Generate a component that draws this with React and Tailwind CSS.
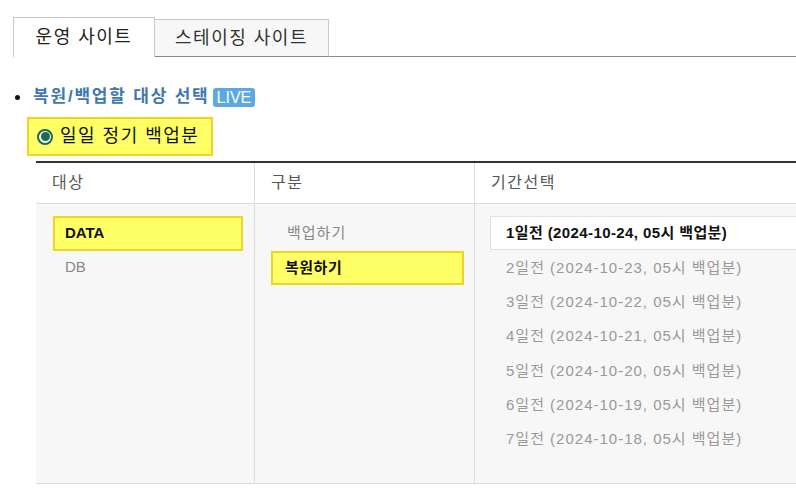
import { useState } from "react";

const FONT = { fontFamily: '"Liberation Sans", "Noto Sans CJK KR", sans-serif' };

const periods = [
  "1일전 (2024-10-24, 05시 백업분)",
  "2일전 (2024-10-23, 05시 백업분)",
  "3일전 (2024-10-22, 05시 백업분)",
  "4일전 (2024-10-21, 05시 백업분)",
  "5일전 (2024-10-20, 05시 백업분)",
  "6일전 (2024-10-19, 05시 백업분)",
  "7일전 (2024-10-18, 05시 백업분)",
];

export default function App() {
  const [tab, setTab] = useState(0);

  return (
    <div className="w-[796px] h-[496px] overflow-hidden bg-white text-[#333]" style={FONT}>
      {/* Tabs */}
      <div className="flex items-end pt-[17px] pl-[13px]">
        <button
          onClick={() => setTab(0)}
          className="w-[142px] h-[40px] border border-b-0 border-[#c8c8c8] bg-white text-[18px] tracking-[1.5px] text-[#222]"
        >
          운영 사이트
        </button>
        <button
          onClick={() => setTab(1)}
          className="w-[174px] h-[38px] border border-l-0 border-[#c8c8c8] border-b-[#8a8a8a] bg-[#f7f7f7] text-[18px] tracking-[1.5px] text-[#333]"
        >
          스테이징 사이트
        </button>
        <div className="flex-1 border-b border-[#8a8a8a]" />
      </div>

      {/* Heading */}
      <div className="flex items-center mt-[30px] pl-[15px] h-[20px]">
        <span className="w-[5px] h-[5px] rounded-full bg-[#111] mr-[13px]" />
        <span className="text-[17px] font-bold text-[#3f77b0] tracking-[1.8px]">복원/백업할 대상 선택</span>
        <span className="ml-[3px] px-[4px] h-[19px] leading-[19px] rounded-[3px] bg-[#5ba8e3] text-white text-[16px]">LIVE</span>
      </div>

      {/* Radio */}
      <div className="ml-[27px] mt-[10px] w-[186px] h-[39px] flex items-center bg-[#ffff66] border-2 border-[#f0d324]">
        <span className="ml-[8px] w-[16px] h-[16px] rounded-full border-2 border-[#1f6b4f] flex items-center justify-center bg-white">
          <span className="w-[9px] h-[9px] rounded-full bg-[#1f6b4f]" />
        </span>
        <span className="ml-[7px] text-[18px] tracking-[1.5px] text-[#111]">일일 정기 백업분</span>
      </div>

      {/* Table */}
      <div className="ml-[36px] mt-[5px] border-t-2 border-[#333]">
        <div className="grid grid-cols-[219px_220px_1fr] h-[41px] border-b border-[#dcdcdc] text-[16px] tracking-[1.5px] text-[#555]">
          <div className="flex items-center pl-[16px] border-r border-[#dcdcdc]">대상</div>
          <div className="flex items-center pl-[16px] border-r border-[#dcdcdc]">구분</div>
          <div className="flex items-center pl-[16px]">기간선택</div>
        </div>
        <div className="grid grid-cols-[219px_220px_1fr] h-[280px] bg-[#f7f7f7] border-b border-[#dcdcdc] text-[15px]">
          <div className="border-r border-[#dcdcdc] pt-[12px] pl-[17px] pr-[11px]">
            <div className="h-[35px] flex items-center pl-[10px] bg-[#ffff66] border-2 border-[#f0d324] font-bold text-[#111]">
              DATA
            </div>
            <div className="h-[32px] flex items-center pl-[12px] text-[#888]">DB</div>
          </div>
          <div className="border-r border-[#dcdcdc] pt-[12px] pl-[16px] pr-[10px]">
            <div className="h-[35px] flex items-center pl-[16px] tracking-[1px] text-[#888]">백업하기</div>
            <div className="h-[34px] flex items-center pl-[12px] bg-[#ffff66] border-2 border-[#f0d324] font-bold tracking-[0.5px] text-[#111]">
              복원하기
            </div>
          </div>
          <div className="pt-[12px] pl-[15px]">
            {periods.map((p, i) => (
              <div
                key={p}
                className={
                  i === 0
                    ? "h-[34px] flex items-center pl-[15px] bg-white border border-r-0 border-[#e2e2e2] font-bold tracking-[0.4px] text-[#111] mb-px"
                    : "h-[34.3px] flex items-center pl-[16px] tracking-[1px] text-[#999]"
                }
              >
                {p}
              </div>
            ))}
          </div>
        </div>
      </div>
    </div>
  );
}
